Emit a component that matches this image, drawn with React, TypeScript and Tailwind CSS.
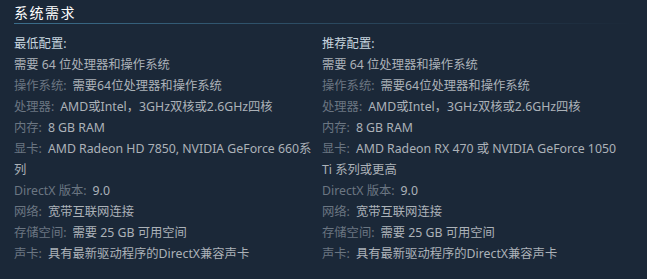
import React from "react";

type Row = { label?: string; value: string };

const minRows: Row[] = [
  { label: "操作系统:", value: "需要64位处理器和操作系统" },
  { label: "处理器:", value: "AMD或Intel，3GHz双核或2.6GHz四核" },
  { label: "内存:", value: "8 GB RAM" },
  { label: "显卡:", value: "AMD Radeon HD 7850, NVIDIA GeForce 660系列" },
  { label: "DirectX 版本:", value: "9.0" },
  { label: "网络:", value: "宽带互联网连接" },
  { label: "存储空间:", value: "需要 25 GB 可用空间" },
  { label: "声卡:", value: "具有最新驱动程序的DirectX兼容声卡" },
];

const recRows: Row[] = [
  { label: "操作系统:", value: "需要64位处理器和操作系统" },
  { label: "处理器:", value: "AMD或Intel，3GHz双核或2.6GHz四核" },
  { label: "内存:", value: "8 GB RAM" },
  { label: "显卡:", value: "AMD Radeon RX 470 或 NVIDIA GeForce 1050 Ti 系列或更高" },
  { label: "DirectX 版本:", value: "9.0" },
  { label: "网络:", value: "宽带互联网连接" },
  { label: "存储空间:", value: "需要 25 GB 可用空间" },
  { label: "声卡:", value: "具有最新驱动程序的DirectX兼容声卡" },
];

function Col({ title, rows, width }: { title: string; rows: Row[]; width: string }) {
  return (
    <div className={width}>
      <div className="text-[#c6d4df]">{title}</div>
      <ul>
        <li>需要 64 位处理器和操作系统</li>
        {rows.map((r, i) => (
          <li key={i}>
            <span className="text-[#6b7682]">{r.label}</span>
            <span className="ml-[6px]">{r.value}</span>
          </li>
        ))}
      </ul>
    </div>
  );
}

export default function App() {
  return (
    <div
      className="w-[647px] h-[279px] bg-[#1b2838] text-[#acb2b8] px-[14px] pt-[3px]"
      style={{ fontFamily: '"Noto Sans", "Noto Sans CJK SC", Arial, sans-serif' }}
    >
      <div>
        <h2 className="text-white text-[14px] leading-[20px] tracking-[1.5px] font-normal">系统需求</h2>
        <div className="h-px w-full bg-gradient-to-r from-[#3b6e8c] to-[#1b2838]" />
      </div>
      <div className="flex mt-[9px] text-[12.3px] leading-[21px]">
        <Col title="最低配置:" rows={minRows} width="w-[300px] mr-[8px]" />
        <Col title="推荐配置:" rows={recRows} width="w-[302px]" />
      </div>
    </div>
  );
}
